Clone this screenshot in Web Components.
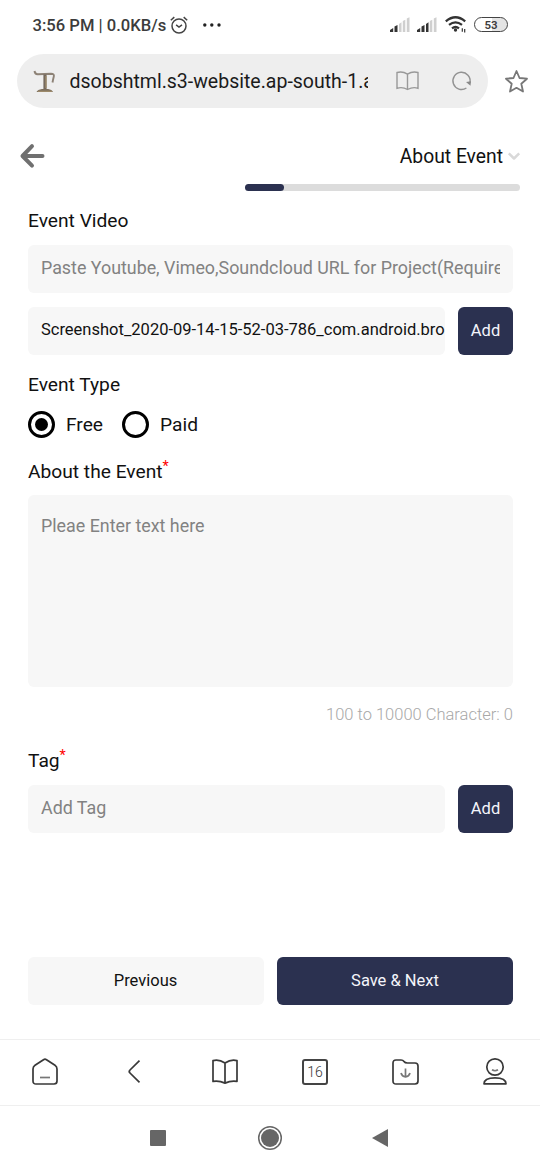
<!DOCTYPE html>
<html lang="en">
<head>
<meta charset="utf-8">
<title>About Event</title>
<style>
html,body{margin:0;background:#fff}
body{width:540px;height:1170px;overflow:hidden;font-family:Roboto,"Liberation Sans",sans-serif;color:#111}
</style>
</head>
<body>
<event-screen></event-screen>
<script>
const define = (name, css, html) => {
  const t = document.createElement('template');
  t.innerHTML = `<style>*{box-sizing:border-box}svg{display:block;fill:none;overflow:visible}${css}</style>${html}`;
  customElements.define(name, class extends HTMLElement {
    constructor() {
      super();
      this.attachShadow({mode: 'open'}).append(t.content.cloneNode(true));
    }
  });
};

define('status-bar', `
:host{display:flex;height:54px;padding:0 32px 5px 32.5px;align-items:center;font-size:16.6px;font-weight:500;color:#3c3c3c}
.time{white-space:pre;width:133px;padding-top:2px}
.alarm{margin-left:4px}
.dots{margin-left:15px}
.right{margin-left:auto;display:flex;align-items:center}
.battery{display:flex;align-items:center;justify-content:center;width:34px;height:15px;margin-left:7px;border:1.5px solid #444;border-radius:8px;background:linear-gradient(90deg,#fff 0 52%,#e4e4e4 52%);font-size:11.500px;line-height:12px;font-weight:600}
`, `<span class="time">3:56 PM | 0.0KB/s</span>
<svg class="alarm" width="18" height="18" viewBox="0 0 18 18" stroke="#444" stroke-width="1.5"><circle cx="9" cy="10" r="7"/><path d="M.8 4.2 4.3 1.1M17.2 4.2 13.7 1.1M6.1 8.8 9 11 12 8.8"/></svg>
<svg class="dots" width="18" height="4" viewBox="0 0 18 4"><g fill="#222"><circle cx="1.8" cy="2" r="1.7"/><circle cx="8.8" cy="2" r="1.7"/><circle cx="16" cy="2" r="1.7"/></g></svg>
<div class="right">
<svg width="47" height="16" viewBox="0 0 47 16"><path fill="#333" d="M0 15v-2l3.2-2v4zM4.5 15V9.5L7.5 8v7z"/><path fill="#cfcfcf" d="M9 15V7l2.5-1.7V15zM12.8 15V4l2.5-1.3V15zM16.8 15V1.5L19.5.3V15z"/><g transform="translate(27 0)"><path fill="#333" d="M0 15v-2l3.2-2v4zM4.5 15V9.5L7.5 8v7zM9 15V7l2.5-1.7V15z"/><path fill="#cfcfcf" d="M12.8 15V4l2.5-1.3V15zM16.8 15V1.5L19.5.3V15z"/></g></svg>
<svg style="margin-left:8px" width="22" height="17" viewBox="0 0 22 17" stroke="#333" stroke-width="2.3"><path d="M.8 5.3Q10.5-2.8 20.2 5.3M4 8.9q6.5-5 13 0M7 12.3q3.5-2.6 7 0"/><circle cx="10.5" cy="14" r="1.7" fill="#333" stroke="none"/><path stroke-width="1.2" d="M17.3 12.2v3.6M19.7 13v3.6"/></svg>
<div class="battery">53</div></div>`);

define('address-bar', `
:host{display:flex;height:54px;padding:0 12px 0 17px;align-items:center;justify-content:space-between}
.pill{display:flex;align-items:center;width:471px;height:54px;border-radius:27px;background:#eee;padding:0 17px 0 16px}
.url{width:298px;margin:0 28px 0 14.500px;overflow:hidden;white-space:nowrap;font-size:19.5px;line-height:28px;color:#1b1b1b;padding-top:2px}
`, `<div class="pill">
<svg width="22" height="23" viewBox="0 0 22 23"><path d="M1.500 1Q2 4.500 5 4.200L18 3.700Q21.500 3.700 20.800 6.500T19.500 12.500" stroke="#8d8276" stroke-width="1.900"/><path d="M12 4.500V19" stroke="#75695d" stroke-width="3.200"/><path d="M3.500 22q1-2.500 5.500-3h6q4 .5 5 3z" fill="#7d6f5e"/><path d="M13 6v12M5 21.300h14" stroke="#a8946f" stroke-width="1.1"/></svg>
<span class="url">dsobshtml.s3-website.ap-south-1.a</span>
<svg width="23" height="20" viewBox="0 0 23 20" stroke="#999" stroke-width="1.4"><path d="M11.5 3.2Q6.5-.2 1 1.5v15.8q5.5-1.7 10.5 1.2Q17 15.600 22 17.300V1.500Q16.500-.200 11.500 3.200zV18.500"/></svg>
<svg style="margin-left:33px" width="19" height="19" viewBox="0 0 19 19"><path d="M14.4 16A8.600 8.600 0 1 1 18 10.500" stroke="#929292" stroke-width="1.4"/><path d="m14 10 5-.8-.5 4.500z" fill="#888"/></svg>
</div><svg width="23" height="23" viewBox="0 0 23 23" stroke="#777" stroke-width="1.800" stroke-linejoin="round"><path d="m11.500 1 3 7 7.500.7-5.700 5 1.700 7.800-6.500-3.700-6.500 3.700 1.700-7.800-5.700-5L8.500 8z"/></svg>`);

define('page-head', `
:host{display:flex;flex-direction:column;height:91px;padding:32px 20px 0}
.row{display:flex;height:32px;align-items:center}
.title{margin-left:auto;font-size:19.3px}
.chev{margin-left:5px}
.track{align-self:flex-end;margin-top:12px;width:275px;height:7px;border-radius:4px;background:#dcdcdc}
.fill{width:39px;height:7px;border-radius:4px;background:#2b3150}
`, `<div class="row"><svg width="25" height="24" viewBox="0 0 25 24" stroke="#707070" stroke-width="4" stroke-linecap="round" stroke-linejoin="round"><path d="M22.500 12H3M12 2.200 2.500 12l9.500 9.600"/></svg><span class="title">About Event</span><svg class="chev" width="12" height="8" viewBox="0 0 12 8" stroke="#d9d9d9" stroke-width="2.500" stroke-linejoin="round"><path d="M.8 1.300 6 6.500l5.200-5.200"/></svg></div><div class="track"><div class="fill"></div></div>`);

define('field-label', `
:host{display:block;height:26px;line-height:26px;font-size:19.2px;white-space:nowrap;color:#111}
.req{display:none;color:#f00;font-size:14.5px;position:relative;top:-7px;line-height:0}
:host([required]) .req{display:inline}
`, `<slot></slot><span class="req">*</span>`);

define('text-field', `
:host{display:flex;flex:1;min-width:0;height:48px;padding:0 13px;align-items:center;border-radius:6px;background:#f7f7f7;color:#828282;font-size:17.85px;line-height:26px}
:host([area]){align-items:flex-start;flex:none;height:192px;padding-top:18px}
:host([file]){padding-right:0;font-size:16.5px;color:#111}
.text{flex:1;overflow:hidden;white-space:nowrap;margin-bottom:2px}
`, `<div class="text"><slot></slot></div>`);

define('push-button', `
:host{display:flex;flex:none;width:55px;height:48px;align-items:center;justify-content:center;border-radius:6px;background:#2b3150;color:#f4f5fb;font-size:16.5px;padding-bottom:2px}
:host([wide]){width:236px;padding-bottom:1px}
:host([light]){background:#f7f7f7;color:#111;padding-right:1px}
`, `<slot></slot>`);

define('radio-option', `
:host{display:flex;align-items:center;font-size:19.2px}
.ring{display:grid;place-items:center;width:27px;height:27px;border:3px solid #000;border-radius:50%;margin-right:11.500px}
.dot{display:none;width:13px;height:13px;border-radius:50%;background:#000}
:host([checked]) .dot{display:block}
`, `<span class="ring"><span class="dot"></span></span><slot></slot>`);

define('event-form', `
:host{display:flex;flex-direction:column;height:840px;padding:9px 27px 0 28px}
.row{display:flex;gap:13px}
.radios{display:flex;gap:18.500px;height:28px;margin-top:12px;margin-left:-.5px}
.count{height:24px;line-height:24px;margin-top:16px;text-align:right;font-size:16.500px;font-weight:300;color:#a8a8a8}
`, `<field-label>Event Video</field-label>
<text-field style="margin-top:11px;flex:none">Paste Youtube, Vimeo,Soundcloud URL for Project(Required)</text-field>
<div class="row" style="margin-top:14px"><text-field file>Screenshot_2020-09-14-15-52-03-786_com.android.bro</text-field><push-button>Add</push-button></div>
<field-label style="margin-top:17px">Event Type</field-label>
<div class="radios"><radio-option checked>Free</radio-option><radio-option>Paid</radio-option></div>
<field-label required style="margin-top:21px">About the Event</field-label>
<text-field area style="margin-top:10px">Pleae Enter text here</text-field>
<div class="count">100 to 10000 Character: 0</div>
<field-label required style="margin-top:21px">Tag</field-label>
<div class="row" style="margin-top:11px"><text-field>Add Tag</text-field><push-button>Add</push-button></div>
<div class="row" style="margin-top:124.400px"><push-button wide light>Previous</push-button><push-button wide>Save &amp; Next</push-button></div>`);

define('browser-tools', `
:host{display:grid;grid-template-columns:repeat(6,90px);height:67px;border-top:1px solid #efefef;border-bottom:1px solid #efefef;place-items:center;padding-bottom:2px}
svg{stroke:#393939;stroke-width:1.7;stroke-linejoin:round}
.tabs{display:grid;place-items:center;width:26px;height:26px;border:2px solid #444;border-radius:3px;font-size:14px;font-weight:300;color:#333;line-height:20px}
`, `<svg width="26" height="27" viewBox="0 0 26 27"><path d="M3 7.300 11.500 1.700Q13 .7 14.500 1.700L23 7.300Q25 8.600 25 11v12q0 3-3 3H4q-3 0-3-3V11q0-2.400 2-3.700z"/><path stroke="#777" d="M8 19.500h10"/></svg>
<svg style="margin-right:2px" width="12" height="23" viewBox="0 0 12 23"><path d="M11.500.7 2 10q-1.500 1.500 0 3l9.500 9.300"/></svg>
<svg width="26" height="25" viewBox="0 0 26 25"><path d="M13 4Q7 0 1 1.600v20.800q6-1 12 1.700 6-2.700 12-1.700V1.600Q19 0 13 4zV24"/></svg>
<div class="tabs">16</div>
<svg width="27" height="26" viewBox="0 0 27 26"><path d="M1 4q0-3 3-3h5q2 0 3 1.500T15.500 4H23q3 0 3 3v15q0 3-3 3H4q-3 0-3-3z"/><path stroke="#777" d="M13.500 9.500v8.500M9 14q1 3.500 4.500 4 3.500-.5 4.500-4"/></svg>
<svg width="24" height="27" viewBox="0 0 24 27"><circle cx="12" cy="9" r="8.200"/><path stroke="#777" d="M9 11.800q3 1.900 6 0"/><path d="M1 25.800q0-6 11-6t11 6z"/></svg>`);

define('system-nav', `
:host{display:flex;height:64px;align-items:center;padding-left:150px}
svg+svg{margin-left:92px}
svg:last-child{margin-left:90px}
`, `<svg width="16" height="16" viewBox="0 0 16 16"><rect width="16" height="16" rx="1" fill="#666"/></svg>
<svg width="24" height="24" viewBox="0 0 24 24"><circle cx="12" cy="12" r="11.300" stroke="#666" stroke-width="1.500"/><circle cx="12" cy="12" r="9" fill="#666"/></svg>
<svg width="16" height="18" viewBox="0 0 16 18"><path d="M16 0v18L0 9z" fill="#666"/></svg>`);

define('event-screen', `:host{display:flex;flex-direction:column;width:540px;height:1170px;background:#fff}`,
`<status-bar></status-bar><address-bar></address-bar><page-head></page-head><event-form></event-form><browser-tools></browser-tools><system-nav></system-nav>`);
</script>
</body>
</html>
